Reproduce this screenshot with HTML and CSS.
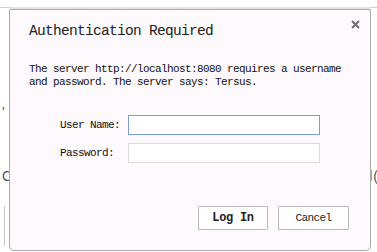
FILE: index.html
```html
<!DOCTYPE html>
<html lang="en">
<head>
    <meta charset="UTF-8">
    <meta name="viewport" content="width=device-width, initial-scale=1.0">
    <title>Authentication Required</title>
    <link rel="stylesheet" href="styles.css">
</head>
<body>
    <div class="page">
        <div class="page-bar"></div>
        <p class="page-line page-line-first">'</p>
        <div class="page-line page-row">
            <span>Connect</span>
            <span class="page-row-end">l(</span>
        </div>
        <div class="page-panel"></div>
    </div>

    <div class="dialog" role="dialog" aria-labelledby="dialog-title">
        <button class="dialog-close" type="button" aria-label="Close">
            <svg width="9" height="9" viewBox="0 0 9 9">
                <path d="M1 1 L8 8 M8 1 L1 8" stroke="#6f6f6f" stroke-width="2" fill="none"/>
            </svg>
        </button>
        <h1 class="dialog-title" id="dialog-title">Authentication Required</h1>
        <p class="dialog-message">
            The server http://localhost:8080 requires a username<br>
            and password. The server says: Tersus.
        </p>
        <form class="login-form">
            <div class="form-row">
                <label class="form-label" for="username">User Name:</label>
                <input class="form-input form-input-focus" id="username" type="text">
            </div>
            <div class="form-row">
                <label class="form-label" for="password">Password:</label>
                <input class="form-input" id="password" type="password">
            </div>
        </form>
        <div class="dialog-actions">
            <button class="btn btn-primary" type="button">Log In</button>
            <button class="btn" type="button">Cancel</button>
        </div>
    </div>
</body>
</html>
```

FILE: styles.css
```css
:root {
    --dialog-bg: #fdf9fc;
    --border: #a9a9a9;
    --text: #1e1e1e;
    --input-border: #dddddd;
    --focus-border: #7a9fd3;
    --mono: 'Liberation Mono', 'DejaVu Sans Mono', monospace;
}

* {
    margin: 0;
    padding: 0;
    box-sizing: border-box;
}

body {
    margin: 0;
    width: 377px;
    height: 252px;
    overflow: hidden;
    background: #ffffff;
    font-family: var(--mono);
    color: var(--text);
    position: relative;
}

/* page behind the dialog */
.page {
    padding-top: 7px;
}

.page-bar {
    height: 1px;
    background: #cfcfcf;
}

.page-line {
    font-family: 'Liberation Sans', sans-serif;
    font-size: 14px;
    line-height: 16px;
    color: #555;
    padding-left: 2px;
}

.page-line-first {
    margin-top: 96px;
}

.page-row {
    margin-top: 48px;
    display: flex;
    justify-content: space-between;
}

.page-row-end {
    letter-spacing: 1px;
    margin-right: -2px;
}

.page-panel {
    margin: 22px 0 0 4px;
    height: 40px;
    border-left: 1px solid #c4c4c4;
}

/* dialog */
.dialog {
    position: absolute;
    left: 9px;
    top: 9px;
    width: 362px;
    height: 242px;
    background: var(--dialog-bg);
    border: 1px solid var(--border);
    border-radius: 2px 2px 5px 5px;
    box-shadow: 0 -2px 0 #e4e4e4;
    padding: 12px 21px 0 19px;
}

.dialog-close {
    position: absolute;
    top: 9px;
    right: 9px;
    width: 11px;
    height: 11px;
    border: none;
    background: transparent;
    display: flex;
    align-items: center;
    justify-content: center;
}

.dialog-title {
    font-size: 14.5px;
    letter-spacing: -0.7px;
    font-weight: normal;
    line-height: 18px;
    color: #222;
}

.dialog-message {
    margin-top: 23px;
    font-size: 11px;
    letter-spacing: -0.6px;
    line-height: 13px;
    color: #111;
}

.login-form {
    margin-top: 26px;
    padding-left: 31px;
    display: flex;
    flex-direction: column;
    gap: 8px;
}

.form-row {
    display: flex;
    align-items: center;
}

.form-label {
    width: 68px;
    font-size: 11px;
    letter-spacing: -0.6px;
    color: #111;
}

.form-input {
    width: 192px;
    height: 20px;
    border: 1px solid var(--input-border);
    background: #fff;
    outline: none;
}

.form-input-focus {
    border-color: var(--focus-border);
}

.dialog-actions {
    margin-top: 43px;
    display: flex;
    justify-content: flex-end;
    gap: 10px;
}

.btn {
    width: 71px;
    height: 24px;
    border: 1px solid #b9b9b9;
    border-radius: 1px;
    background: #ffffff;
    font-family: var(--mono);
    font-size: 11px;
    letter-spacing: -0.6px;
    color: #222;
}

.btn-primary {
    font-weight: bold;
    font-size: 12px;
    letter-spacing: -0.3px;
    width: 70px;
}
```
